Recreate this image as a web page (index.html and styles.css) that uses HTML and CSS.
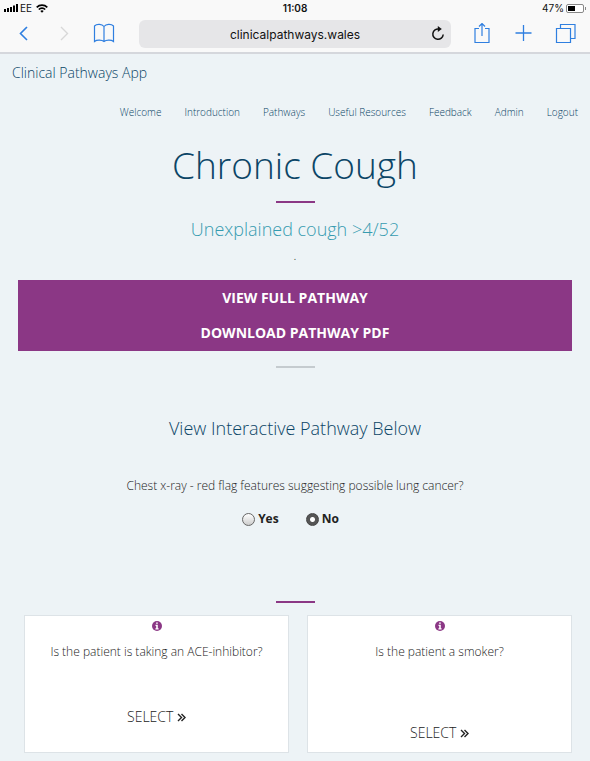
FILE: index.html
```html
<!DOCTYPE html>
<html lang="en">
<head>
  <title>Chronic Cough</title>
  <meta charset="UTF-8">
  <meta name="viewport" content="width=device-width, initial-scale=1">
  <link rel="stylesheet" href="styles.css">
</head>
<body>

  <!-- browser bar -->
  <div class="browser">
    <div class="status">
      <div class="status-left">
        <svg width="14" height="8" viewBox="0 0 14 8"><path d="M0 5h2v3H0zM3 4h2v4H3zM6 3h2v5H6zM9 1.500h2v6.500H9zM12 0h2v8h-2z"/></svg>
        <span>EE</span>
        <svg width="12" height="9" viewBox="0 0 12 9" fill="none" stroke="#000" stroke-width="1.700"><path d="M.7 3.300a7.500 7.500 0 0 1 10.600 0M2.800 5.500a4.500 4.500 0 0 1 6.400 0"/><path d="M6 8.800L4.300 7a2.400 2.400 0 0 1 3.400 0z" fill="#000" stroke="none"/></svg>
      </div>
      <strong class="clock">11:08</strong>
      <div class="status-right">
        <span>47%</span>
        <svg width="20" height="9" viewBox="0 0 20 9"><rect x=".5" y=".5" width="17" height="8" rx="1.500" fill="#fff" stroke="#888"/><path d="M2 2h7v5H2z"/><path d="M19 3h1v3h-1z" fill="#888"/></svg>
      </div>
    </div>

    <div class="toolbar">
      <div class="tools tools-left">
        <button class="tool" aria-label="Back"><svg width="22" height="22" viewBox="0 0 22 22"><path d="M14 4L7.500 10.500l6.500 6.500" stroke-width="1.600"/></svg></button>
        <button class="tool forward" aria-label="Forward" disabled><svg width="22" height="22" viewBox="0 0 22 22"><path d="M8 4l6.500 6.500L8 17" stroke-width="1.400"/></svg></button>
        <button class="tool" aria-label="Bookmarks"><svg width="22" height="22" viewBox="0 0 22 22"><path d="M11 3.500C9 1 4 .5 1.500 3v15.500c2.500-2 7.500-1.500 9.500 0 2-1.500 7-2 9.500 0V3C18 .5 13 1 11 3.500zV18.500"/></svg></button>
      </div>
      <div class="address">
        <input class="url" type="text" value="clinicalpathways.wales" aria-label="Address">
        <button class="tool reload" aria-label="Reload"><svg width="14" height="16" viewBox="0 0 14 16"><path d="M8 3A5.200 5.200 0 1 0 12.200 8.500" stroke-width="1.500"/><path d="M6.800 0l4 3-4 3z" fill="#111" stroke="none"/></svg></button>
      </div>
      <div class="tools">
        <button class="tool" aria-label="Share"><svg width="22" height="22" viewBox="0 0 22 22"><path d="M8 5.500H4v14h14v-14h-4M11 13V.8M8 3.500l3-3 3 3"/></svg></button>
        <button class="tool" aria-label="New tab"><svg width="22" height="22" viewBox="0 0 22 22"><path d="M10.500 2v16M2.500 10h16" stroke-width="1.300"/></svg></button>
        <button class="tool" aria-label="Tabs"><svg width="22" height="22" viewBox="0 0 22 22"><path d="M1.500 5.500h14v14h-14zM5.500 5.500v-4h14.500v14h-4.500"/></svg></button>
      </div>
    </div>
  </div>

  <!-- site menu -->
  <header class="site-header">
    <a class="brand" href="#">Clinical Pathways App</a>
    <nav class="menu">
      <a href="#">Welcome</a>
      <a href="#">Introduction</a>
      <a href="#">Pathways</a>
      <a href="#">Useful Resources</a>
      <a href="#">Feedback</a>
      <a href="#">Admin</a>
      <a href="#">Logout</a>
    </nav>
  </header>

  <main class="content">
    <h1 class="title">Chronic Cough</h1>
    <hr class="line">
    <h2 class="subtitle">Unexplained cough &gt;4/52</h2>
    <p class="dot">.</p>

    <div class="actions">
      <a href="#">VIEW FULL PATHWAY</a>
      <a href="#">DOWNLOAD PATHWAY PDF</a>
    </div>
    <hr class="line line-grey">

    <h3 class="heading">View Interactive Pathway Below</h3>

    <form class="question">
      <p>Chest x-ray - red flag features suggesting possible lung cancer?</p>
      <div class="answers">
        <label><input type="radio" name="redflag" value="yes">Yes</label>
        <label><input type="radio" name="redflag" value="no" checked>No</label>
      </div>
    </form>
    <hr class="line">

    <div class="cards">
      <div class="card">
        <svg class="info" viewBox="0 0 10 10"><circle cx="5" cy="5" r="5" fill="#8b3785"/><path d="M4.100 1.400h1.700v1.400H4.100zM3.500 3.800h2.300v3.500h.8v1.100H3.400V7.300h.8V4.900h-.7z" fill="#fff"/></svg>
        <p>Is the patient is taking an ACE-inhibitor?</p>
        <button class="select">SELECT <svg width="9" height="9" viewBox="0 0 9 9"><path d="M1 1l3.500 3.500L1 8M4.500 1L8 4.500 4.500 8"/></svg></button>
      </div>
      <div class="card card-low">
        <svg class="info" viewBox="0 0 10 10"><circle cx="5" cy="5" r="5" fill="#8b3785"/><path d="M4.100 1.400h1.700v1.400H4.100zM3.500 3.800h2.300v3.500h.8v1.100H3.400V7.300h.8V4.900h-.7z" fill="#fff"/></svg>
        <p>Is the patient a smoker?</p>
        <button class="select">SELECT <svg width="9" height="9" viewBox="0 0 9 9"><path d="M1 1l3.500 3.500L1 8M4.500 1L8 4.500 4.500 8"/></svg></button>
      </div>
    </div>
  </main>

</body>
</html>
```
FILE: styles.css
```css
* {
  box-sizing: border-box;
  margin: 0;
}

body {
  background-color: #edf3f6;
  color: #222;
  font-family: 'Open Sans', sans-serif;
  font-weight: 300;
}

a {
  color: inherit;
  text-decoration: none;
}

button {
  border: none;
  padding: 0;
  background: none;
  font: inherit;
  color: inherit;
}

/* browser bar */
.browser {
  background-color: #f9f9f9;
  border-bottom: 2px solid #d5d7dc;
  font-family: Inter, sans-serif;
  font-weight: 400;
}

.status {
  display: grid;
  grid-template-columns: 1fr auto 1fr;
  align-items: center;
  height: 16px;
  padding: 0 4px;
  font-size: 10px;
  line-height: 16px;
  color: #111;
}

.status-left, .status-right {
  display: flex;
  align-items: center;
  gap: 2px;
}

.status-left span {
  margin-right: 2px;
}

.status-right {
  justify-content: flex-end;
}

.clock {
  font-weight: 600;
}

.toolbar {
  display: flex;
  align-items: center;
  gap: 20px;
  height: 36px;
  padding: 0 13px;
}

.tools {
  display: flex;
  gap: 20px;
}

.tools-left {
  gap: 18px;
}

.tool {
  display: flex;
}

.tool svg {
  fill: none;
  stroke: #2f7fe0;
  stroke-width: 1.2px;
}

.forward svg {
  stroke: #d8d8d8;
}

.address {
  display: flex;
  align-items: center;
  flex: 1;
  height: 28px;
  margin-left: 4px;
  padding: 0 6px 0 20px;
  border-radius: 6px;
  background-color: #e6e6e8;
}

.url {
  flex: 1;
  min-width: 0;
  border: none;
  outline: none;
  background: none;
  font-family: Inter, sans-serif;
  font-size: 12px;
  text-align: center;
  color: #111;
}

.reload svg {
  stroke: #111;
}

/* site menu */
.site-header {
  padding: 8px 12px 0;
  color: #0b4566;
}

.brand {
  display: block;
  font-size: 14px;
  line-height: 22px;
}

.menu {
  display: flex;
  justify-content: flex-end;
  gap: 23px;
  margin-top: 20px;
  font-size: 10px;
  line-height: 16px;
}

/* page content */
.content {
  padding: 0 18px 7px;
  text-align: center;
}

.title {
  margin: 18px 0 9px;
  font-size: 37px;
  font-weight: 300;
  line-height: 54px;
  color: #0b4566;
}

.line {
  width: 39px;
  height: 2px;
  margin: 0 auto;
  border: none;
  background-color: #8b3785;
}

.line-grey {
  background-color: #c5cbcf;
}

.subtitle {
  margin: 13px 0 5px;
  font-size: 18px;
  font-weight: 300;
  line-height: 26px;
  color: #369bb0;
}

.dot {
  margin-bottom: 15px;
  font-size: 12px;
  line-height: 18px;
}

.actions {
  margin-bottom: 15px;
  padding-bottom: 1px;
  background-color: #8b3785;
  color: #fff;
  font-size: 14px;
  font-weight: 700;
}

.actions a {
  display: block;
  line-height: 35px;
}

.heading {
  margin: 47px 0 36px;
  font-size: 18px;
  font-weight: 300;
  line-height: 26px;
  color: #0b4566;
}

.question {
  margin-bottom: 73px;
  font-size: 12px;
  line-height: 18px;
}

.answers {
  display: flex;
  justify-content: center;
  gap: 27px;
  margin-top: 15px;
  padding-right: 9px;
  font-weight: 700;
}

.answers label {
  display: flex;
  align-items: center;
  gap: 3px;
}

.answers input {
  appearance: none;
  width: 13px;
  height: 13px;
  margin: 0;
  border: 1px solid #666;
  border-radius: 50%;
  background: linear-gradient(#fff, #ccc);
}

.answers input:checked {
  border-color: #444;
  background: radial-gradient(circle, #fff 2px, #555 3px);
}

.cards {
  display: grid;
  grid-template-columns: 1fr 1fr;
  gap: 18px;
  margin-top: 12px;
  padding-left: 6px;
}

.card {
  display: flex;
  flex-direction: column;
  align-items: center;
  padding: 5px 8px 25px;
  border: 1px solid #dde3e7;
  background-color: #fff;
  font-size: 12px;
  line-height: 18px;
}

.card-low {
  padding-bottom: 9px;
}

.info {
  width: 10px;
  height: 10px;
  margin-bottom: 12px;
}

.select {
  margin-top: 46px;
  font-size: 14px;
  line-height: 20px;
}

.card-low .select {
  margin-top: 62px;
}

.select svg {
  fill: none;
  stroke: #222;
  stroke-width: 1.4px;
}
```
